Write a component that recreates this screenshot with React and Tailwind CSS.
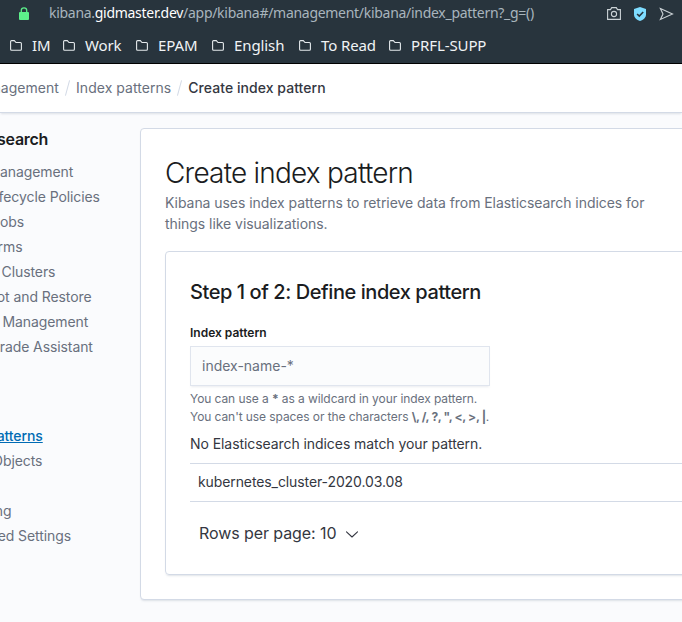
import React from "react";

const FolderIcon = () => (
  <svg width="12" height="11" viewBox="0 0 12 11" fill="none" stroke="#e4e9ec" strokeWidth="1.1" className="shrink-0">
    <path d="M.6 1.6Q.6.6 1.6.6H4.3L6 2.5H10.4Q11.4 2.5 11.4 3.5V9.3Q11.4 10.3 10.4 10.3H1.6Q.6 10.3.6 9.3Z" />
  </svg>
);

const bookmarks = [
  { label: "IM", cls: "w-[53px]" },
  { label: "Work", cls: "w-[73px]" },
  { label: "EPAM", cls: "w-[76px]" },
  { label: "English", cls: "w-[87px]" },
  { label: "To Read", cls: "w-[90px]" },
  { label: "PRFL-SUPP", cls: "w-[120px]" },
];

const elasticLinks = [
  "Index Management",
  "Index Lifecycle Policies",
  "Rollup Jobs",
  "Transforms",
  "Remote Clusters",
  "Snapshot and Restore",
  "License Management",
  "8.0 Upgrade Assistant",
];

const kibanaLinks = ["Index Patterns", "Saved Objects", "Spaces", "Reporting", "Advanced Settings"];

function BrowserBar() {
  return (
    <header className="flex h-16 flex-col border-b border-black bg-[#28343d] font-['Noto_Sans',sans-serif]">
      <div className="flex h-7 items-center pl-[19px] pr-2">
        <svg width="10" height="13" viewBox="0 0 10 13" className="shrink-0">
          <path d="M2.3 6V3.2a2.7 2.4 0 0 1 5.4 0V6" fill="none" stroke="#5df08b" strokeWidth="1.3" />
          <rect y="5" width="10" height="8" rx="1" fill="#5df08b" />
        </svg>
        <div className="-mt-0.5 ml-5 w-[540px] whitespace-nowrap text-sm tracking-[-0.29px] text-[#a9b5bd]">
          kibana.<span className="text-white">gidmaster.dev</span>/app/kibana#/management/kibana/index_pattern?_g=()
        </div>
        <div className="ml-[18px] flex items-center gap-3">
          <svg width="14" height="13" viewBox="0 0 14 13" fill="none" stroke="#cbd2d6" strokeWidth="1.1">
            <path d="M.6 2.6H3.5L4.7.6H9.3L10.5 2.6H13.4V12.4H.6Z" />
            <circle cx="7" cy="7" r="2.6" />
          </svg>
          <svg width="14" height="14" viewBox="0 0 14 14">
            <path d="M7 0 13 2V7.5C13 10.6 10.5 12.8 7 14 3.5 12.8 1 10.6 1 7.5V2Z" fill="#7edcff" />
            <path d="M4.1 7 6.3 9.1 10.2 5" fill="none" stroke="#28343d" strokeWidth="1.6" />
          </svg>
          <svg width="15" height="14" viewBox="0 0 15 14" fill="none" stroke="#cbd2d6" strokeWidth="1.1">
            <path d="M1.4 1.5 13.5 7 1.4 12.5 4 7Z" />
          </svg>
        </div>
      </div>
      <nav className="flex h-9 items-center pl-[10px] text-[15px] tracking-[-0.1px] text-[#f0f3f5]">
        {bookmarks.map((b) => (
          <div key={b.label} className={`flex shrink-0 items-center gap-[10px] whitespace-nowrap ${b.cls}`}>
            <FolderIcon />
            <span>{b.label}</span>
          </div>
        ))}
      </nav>
    </header>
  );
}

function Breadcrumbs() {
  return (
    <div className="flex h-[49px] items-center overflow-hidden whitespace-nowrap border-b border-[#d3dae6] bg-white text-sm tracking-[0.05px] text-[#69707d] shadow-[0_2px_2px_-1px_rgba(152,162,179,0.3)]">
      <div className="flex w-[59px] shrink-0 justify-end">
        <span>Management</span>
      </div>
      <span className="ml-2 h-4 w-px rotate-[15deg] bg-[#d3dae6]" />
      <span className="ml-2">Index patterns</span>
      <span className="ml-2 h-4 w-px rotate-[15deg] bg-[#d3dae6]" />
      <span className="ml-2 font-medium text-[#343741]">Create index pattern</span>
    </div>
  );
}

function Sidebar() {
  return (
    <aside className="w-[140px] shrink-0 overflow-hidden pt-[14px] text-sm tracking-[-0.09px] text-[#69707d]">
      <div className="-ml-[52px] w-[192px] whitespace-nowrap">
        <div className="flex h-6 w-[100px] items-center justify-end text-base font-semibold tracking-[-0.3px] text-[#1a1c21]">Elasticsearch</div>
        <ul className="mt-2">
          {elasticLinks.map((l) => (
            <li key={l} className="h-[25px] leading-[25px]">{l}</li>
          ))}
        </ul>
        <ul className="mt-16">
          {kibanaLinks.map((l, i) => (
            <li key={l} className={`h-[25px] leading-[25px] ${i === 0 ? "font-medium text-[#006bb4] underline" : ""}`}>{l}</li>
          ))}
        </ul>
      </div>
    </aside>
  );
}

export default function App() {
  return (
    <div className="flex h-[622px] w-[682px] flex-col overflow-hidden bg-[#fafbfd] font-['Inter',sans-serif] text-[#343741]">
      <BrowserBar />
      <Breadcrumbs />
      <div className="flex min-h-0 grow">
        <Sidebar />
        <main className="mt-[15px] h-[472px] w-[560px] shrink-0 rounded border border-[#d3dae6] bg-white pl-6 pt-6 shadow-[0_2px_2px_-1px_rgba(152,162,179,0.3)]">
          <h1 className="h-[39px] whitespace-nowrap text-[28px] font-light leading-10 tracking-[-0.79px] text-[#1a1c21]">Create index pattern</h1>
          <p className="w-[500px] whitespace-nowrap text-sm leading-[21px] tracking-[-0.05px] text-[#69707d]">
            Kibana uses index patterns to retrieve data from Elasticsearch indices for
            <br />
            things like visualizations.
          </p>
          <section className="mt-[17px] h-[324px] rounded border border-[#d3dae6] pl-6 pt-6 shadow-[0_2px_2px_-1px_rgba(152,162,179,0.3)]">
            <h2 className="h-8 text-xl font-medium leading-8 tracking-[-0.43px] text-[#1a1c21]">Step 1 of 2: Define index pattern</h2>
            <label className="mt-4 block h-[18px] text-xs font-semibold leading-[18px] text-[#1a1c21]">Index pattern</label>
            <div className="mt-1 flex h-10 w-[300px] items-center border border-[#e0e5ee] bg-[#fbfcfd] pl-[11px] text-sm text-[#69707d] shadow-[0_2px_2px_-1px_rgba(152,162,179,0.2)]">
              index-name-*
            </div>
            <p className="mt-1 whitespace-nowrap text-xs leading-[18px] tracking-[-0.08px] text-[#69707d]">
              You can use a <strong>*</strong> as a wildcard in your index pattern.
              <br />
              You can't use spaces or the characters <strong className="tracking-[-0.35px]">\, /, ?, ", &lt;, &gt;, |</strong>.
            </p>
            <p className="mt-[7px] text-sm leading-[21px] tracking-[-0.07px]">No Elasticsearch indices match your pattern.</p>
            <div className="mt-[9px] flex h-[39px] items-center border-y border-[#d3dae6] pb-0.5 pl-2 text-sm tracking-[-0.1px]">kubernetes_cluster-2020.03.08</div>
            <div className="mt-[19px] flex h-6 items-center gap-[10px] pl-[9px] text-base tracking-[-0.08px]">
              Rows per page: 10
              <svg width="12" height="7" viewBox="0 0 12 7" fill="none" stroke="#343741" strokeWidth="1.1" className="mt-0.5">
                <path d="M.5.8 6 6 11.5.8" strokeLinecap="round" strokeLinejoin="round" />
              </svg>
            </div>
          </section>
        </main>
      </div>
    </div>
  );
}
